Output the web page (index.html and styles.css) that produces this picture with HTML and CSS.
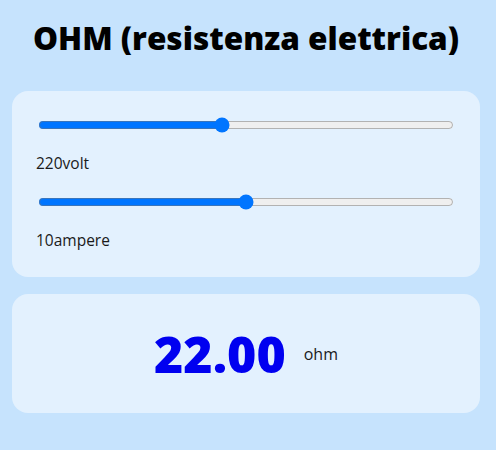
FILE: index.html
```html
<!DOCTYPE html>
<html lang="it">
<head>
<meta charset="utf-8">
<title>OHM</title>
<link rel="stylesheet" href="styles.css">
</head>
<body>
  <main class="app">
    <h1 class="title">OHM (resistenza elettrica)</h1>
    <section class="card controls">
      <input class="slider" type="range" min="0" max="500" value="220">
      <p class="label">220volt</p>
      <input class="slider" type="range" min="0" max="20" value="10">
      <p class="label">10ampere</p>
    </section>
    <section class="card result">
      <span class="value">22.00</span>
      <span class="unit">ohm</span>
    </section>
  </main>
</body>
</html>
```

FILE: styles.css
```css
html, body {
  margin: 0;
  padding: 0;
  background: #c6e3fd;
}

body {
  font-family: "Open Sans", "Liberation Sans", sans-serif;
  color: #111;
}

.app {
  width: 468px;
  margin-left: 12px;
  display: flex;
  flex-direction: column;
  gap: 17px;
}

.title {
  margin: 18px 0 16px;
  text-align: center;
  font-size: 31.5px;
  font-weight: 800;
  line-height: 40px;
  color: #000;
}

.card {
  background: #e3f1fe;
  border-radius: 16px;
}

.controls {
  padding: 24px 24px 26px;
  display: flex;
  flex-direction: column;
  gap: 18px;
}

.slider {
  display: block;
  width: calc(100% - 4px);
  margin: 2px;
  accent-color: #0075ff;
}

.label {
  margin: 0;
  font-size: 15.5px;
  line-height: 21px;
  color: #1a1a1a;
}

.result {
  height: 119px;
  display: flex;
  align-items: center;
  justify-content: center;
  gap: 18px;
}

.value {
  font-size: 50px;
  font-weight: 800;
  color: #0000f0;
  line-height: 1;
}

.unit {
  font-size: 16px;
  color: #1a1a1a;
}
```
